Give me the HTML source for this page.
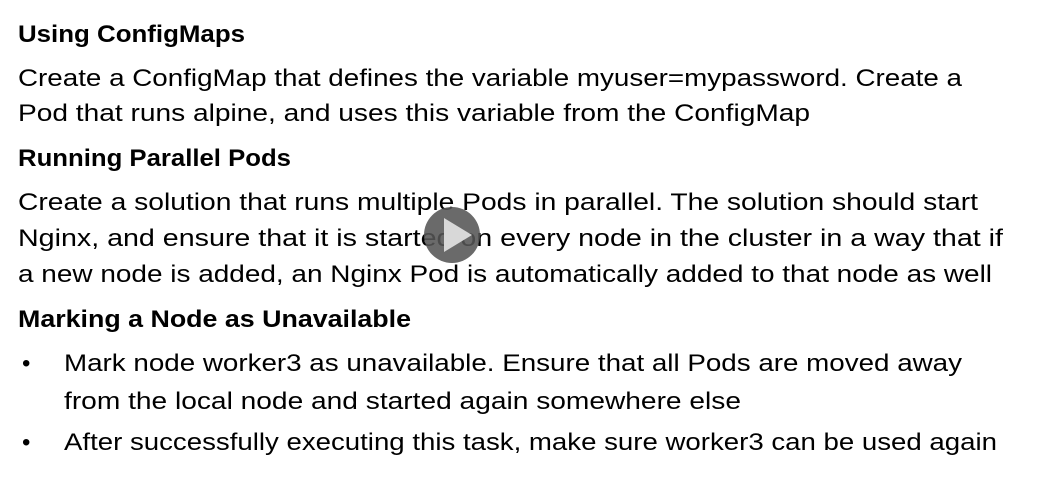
<!DOCTYPE html>
<html><head><meta charset="utf-8"><style>
html,body{margin:0;padding:0;background:#fff;}
svg{display:block}
text{font-family:"Liberation Sans",sans-serif;fill:#000;font-size:24px}
.b{font-weight:bold}
</style></head><body>
<svg width="1044" height="489" viewBox="0 0 1044 489">
<text class="b" x="18" y="42" textLength="227" lengthAdjust="spacingAndGlyphs">Using ConfigMaps</text>
<text x="18" y="86" textLength="944" lengthAdjust="spacingAndGlyphs">Create a ConfigMap that defines the variable myuser=mypassword. Create a</text>
<text x="18" y="121" textLength="792" lengthAdjust="spacingAndGlyphs">Pod that runs alpine, and uses this variable from the ConfigMap</text>
<text class="b" x="18" y="166" textLength="273" lengthAdjust="spacingAndGlyphs">Running Parallel Pods</text>
<text x="18" y="210" textLength="960" lengthAdjust="spacingAndGlyphs">Create a solution that runs multiple Pods in parallel. The solution should start</text>
<text x="18" y="246" textLength="985" lengthAdjust="spacingAndGlyphs">Nginx, and ensure that it is started on every node in the cluster in a way that if</text>
<text x="18" y="282" textLength="974" lengthAdjust="spacingAndGlyphs">a new node is added, an Nginx Pod is automatically added to that node as well</text>
<text class="b" x="18" y="327" textLength="393" lengthAdjust="spacingAndGlyphs">Marking a Node as Unavailable</text>
<text x="22" y="371">•</text>
<text x="64" y="371" textLength="898" lengthAdjust="spacingAndGlyphs">Mark node worker3 as unavailable. Ensure that all Pods are moved away</text>
<text x="64" y="409" textLength="677" lengthAdjust="spacingAndGlyphs">from the local node and started again somewhere else</text>
<text x="22" y="450">•</text>
<text x="64" y="450" textLength="933" lengthAdjust="spacingAndGlyphs">After successfully executing this task, make sure worker3 can be used again</text>
<circle cx="452" cy="235" r="28" fill="#555" fill-opacity="0.88"/>
<polygon points="444,218 444,252 472,235" fill="#d8d8d8"/>
</svg>
</body></html>
